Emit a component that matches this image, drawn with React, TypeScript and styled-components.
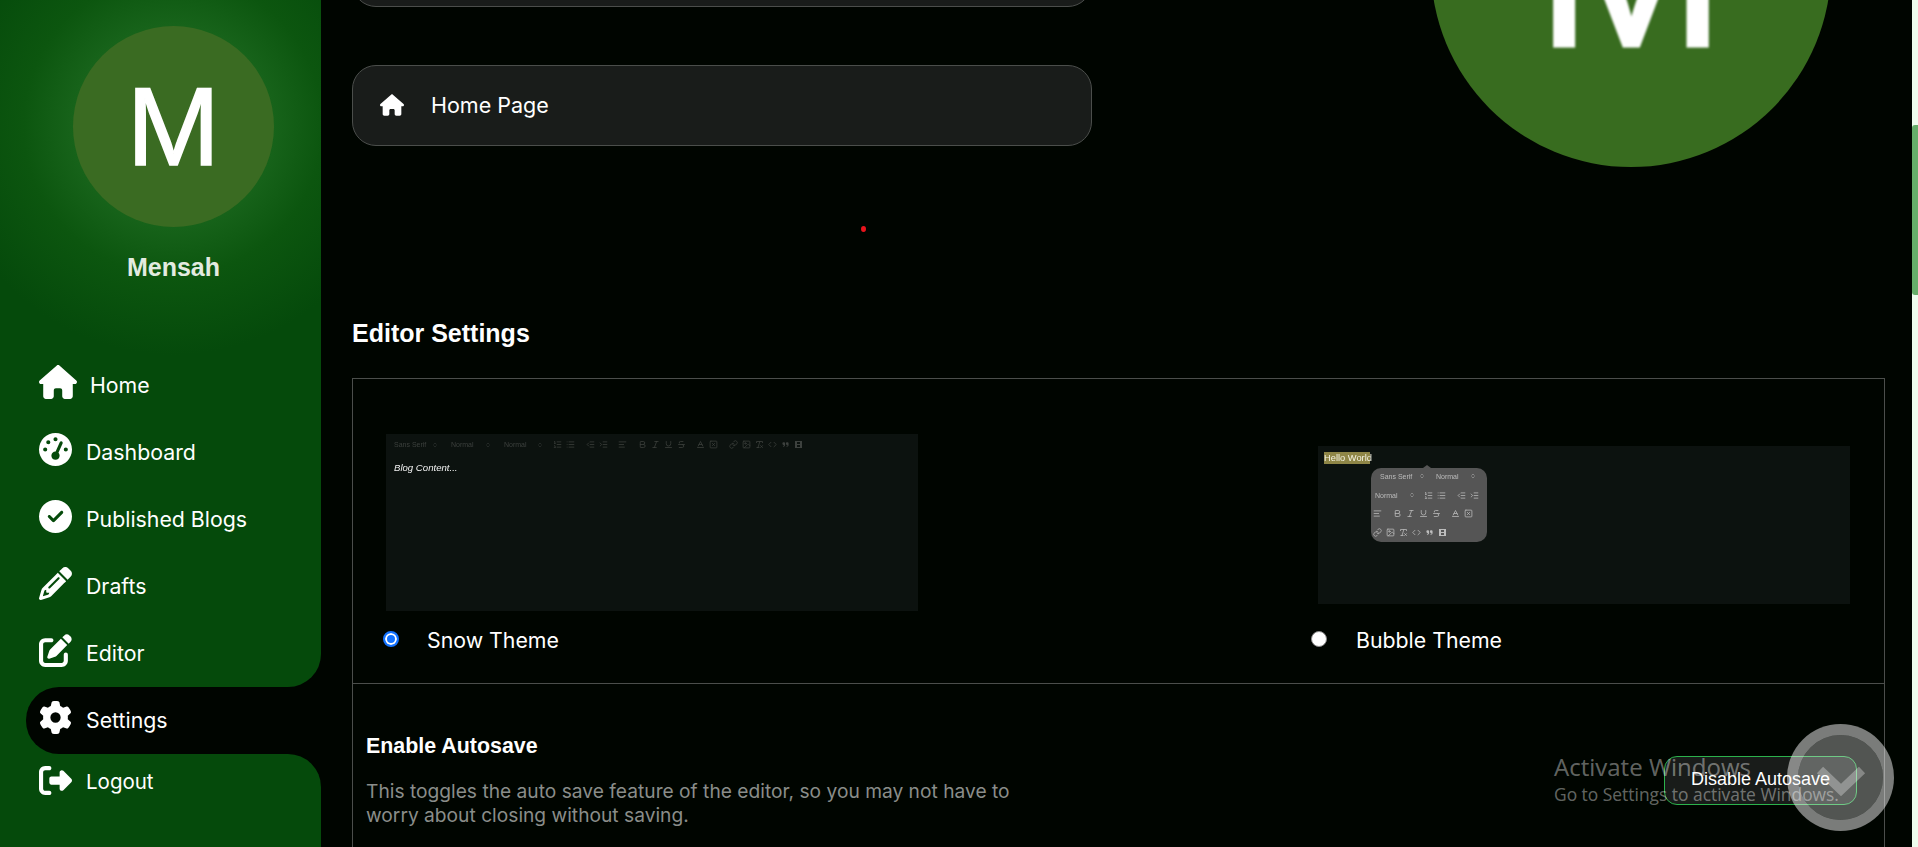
import styled, { createGlobalStyle } from 'styled-components';
import type { ReactNode } from 'react';
import {
  FaHouse,
  FaGaugeHigh,
  FaCircleCheck,
  FaPencil,
  FaPenToSquare,
  FaGear,
  FaRightFromBracket,
  FaQuoteRight,
} from 'react-icons/fa6';
import {
  AlignLeft,
  Baseline,
  Bold,
  ChevronsUpDown,
  Code,
  Image,
  Indent,
  Italic,
  Link,
  List,
  ListOrdered,
  Outdent,
  RemoveFormatting,
  SquareX,
  Strikethrough,
  Underline,
} from 'lucide-react';

const GlobalStyle = createGlobalStyle`
  html, body {
    margin: 0;
    padding: 0;
    height: 100%;
    overflow: hidden;
    background: #000500;
    font-family: Inter, "Liberation Sans", sans-serif;
  }
  * { box-sizing: border-box; }
`;

const Page = styled.div`
  position: relative;
  display: flex;
  width: 1918px;
  height: 847px;
  overflow: hidden;
  background: #000500;
  color: #fff;
`;

/* sidebar */

const Sidebar = styled.aside`
  flex: 0 0 321px;
  display: flex;
  flex-direction: column;
  height: 847px;
  background: linear-gradient(to right, #054a0b 0 70px, #000500 70px);
`;

const SidebarTop = styled.div`
  height: 687px;
  padding-top: 26px;
  border-bottom-right-radius: 33px;
  background: radial-gradient(circle at 173px 125px, #1e6a1c 0, #17631a 100px, #0c560f 150px, #054a0b 230px);
  display: flex;
  flex-direction: column;
`;

const SidebarBottom = styled.div`
  flex: 1;
  padding-top: 10px;
  border-top-right-radius: 33px;
  background: #054a0b;
`;

const Profile = styled.div`
  display: flex;
  flex-direction: column;
  align-items: center;
  padding-left: 26px;
`;

const Avatar = styled.div`
  width: 201px;
  height: 201px;
  border-radius: 50%;
  background: #3a6b22;
  display: flex;
  align-items: center;
  justify-content: center;
`;

const AvatarLetter = styled.span<{ $size: number; $blur: number; $stroke: number }>`
  font-family: "Liberation Sans", sans-serif;
  font-size: ${({ $size }) => $size}px;
  line-height: 1;
  color: #fff;
  -webkit-text-stroke: ${({ $stroke }) => $stroke}px #fff;
  filter: blur(${({ $blur }) => $blur}px);
`;

const UserName = styled.div`
  margin-top: 26px;
  font-family: "Liberation Sans", sans-serif;
  font-size: 25px;
  font-weight: 700;
  line-height: 28px;
  color: #e3ebe0;
`;

const NavList = styled.nav`
  margin-top: 85px;
  display: flex;
  flex-direction: column;
  gap: 34px;
`;

const NavRow = styled.a`
  display: flex;
  align-items: flex-start;
  gap: 14px;
  height: 33px;
  padding-left: 39px;
  color: #fff;
  font-size: 21.3px;
  line-height: 26px;
`;

const ActiveRow = styled(NavRow)`
  height: 67px;
  margin-left: 26px;
  padding: 14px 0 0 13px;
  border-radius: 33px 0 0 33px;
  background: #000500;
`;

const NavLabel = styled.span`
  padding-top: 6px;
`;

const LogoutLabel = styled.span`
  padding-top: 5px;
  font-size: 20.5px;
`;

const WideHouse = styled(FaHouse)`
  margin: -3px -1px 0 0;
`;

/* main column */

const Main = styled.main`
  flex: 1;
  min-width: 0;
  height: 847px;
  overflow: hidden;
  padding: 0 27px 0 31px;
`;

const TopRow = styled.div`
  display: flex;
  align-items: flex-start;
  margin-top: -233px;
  height: 400px;
`;

const LinkColumn = styled.div`
  flex: 0 0 740px;
  padding-top: 159px;
  display: flex;
  flex-direction: column;
  gap: 58px;
`;

const LinkCard = styled.div`
  display: flex;
  align-items: center;
  gap: 27px;
  height: 81px;
  padding: 0 0 2px 27px;
  background: #191c1a;
  border: 1px solid #4b4e4b;
  border-radius: 24px;
  font-size: 21.5px;
  color: #fff;
`;

const BigAvatar = styled.div`
  flex: 0 0 400px;
  height: 400px;
  margin-left: 339px;
  border-radius: 50%;
  background: #386c1f;
  display: flex;
  align-items: center;
  justify-content: center;
`;

const SectionTitle = styled.h2`
  margin: 152px 0 31px;
  font-family: "Liberation Sans", sans-serif;
  font-size: 25px;
  line-height: 28px;
  font-weight: 700;
  color: #fff;
`;

const SettingsBox = styled.section`
  border: 1px solid #4b4e4b;
  border-bottom: 0;
  height: 600px;
`;

const ThemeRow = styled.div`
  display: flex;
  gap: 400px;
  padding: 55px 0 32px 33px;
  border-bottom: 1px solid #4b4e4b;
`;

const ThemeOption = styled.div`
  flex: 0 0 532px;
`;

const Preview = styled.div<{ $top: number; $height: number; $bottom: number }>`
  position: relative;
  margin-top: ${({ $top }) => $top}px;
  margin-bottom: ${({ $bottom }) => $bottom}px;
  height: ${({ $height }) => $height}px;
  background: #0c120f;
  font-family: "Liberation Sans", sans-serif;
  filter: blur(0.35px);
`;

const SnowBar = styled.div`
  display: flex;
  align-items: center;
  height: 21px;
  padding-left: 8px;
  color: #3d413e;
`;

const BarGroup = styled.div`
  display: flex;
  align-items: center;
  margin-right: 6.5px;
`;

const Picker = styled.span<{ $width: number; $arrow: number }>`
  flex: 0 0 auto;
  display: flex;
  align-items: center;
  justify-content: space-between;
  width: ${({ $width }) => $width}px;
  padding-right: ${({ $arrow }) => $arrow}px;
  font-size: 7px;
  white-space: nowrap;
`;

const BarIcon = styled.span`
  flex: 0 0 13px;
  display: flex;
  justify-content: center;
`;

const BlogText = styled.div`
  padding: 7px 0 0 8px;
  font-size: 9.6px;
  line-height: 12px;
  font-style: italic;
  color: #f2f2f2;
`;

const HelloText = styled.span`
  position: absolute;
  left: 6px;
  top: 6px;
  width: 46px;
  height: 12px;
  background: #8f8647;
  color: #f4f2e2;
  font-size: 9.3px;
  line-height: 12px;
  white-space: nowrap;
`;

const Bubble = styled.div`
  position: absolute;
  left: 53px;
  top: 22px;
  width: 116px;
  height: 74px;
  border-radius: 10px;
  background: #555;
  color: #bdbdbd;
  &::before {
    content: '';
    position: absolute;
    left: 52px;
    top: -3px;
    border-left: 4px solid transparent;
    border-right: 4px solid transparent;
    border-bottom: 3px solid #555;
  }
`;

const BubbleRow = styled.div<{ $pad: number }>`
  display: flex;
  align-items: center;
  height: 18.7px;
  padding-left: ${({ $pad }) => $pad}px;
  &:first-of-type {
    margin-top: -1px;
  }
`;

const RadioRow = styled.label`
  display: flex;
  align-items: center;
  height: 22px;
`;

const RadioDot = styled.input.attrs({ type: 'radio' })<{ $inset: number }>`
  appearance: none;
  flex: 0 0 16px;
  width: 16px;
  height: 16px;
  margin: 0 0 2px ${({ $inset }) => $inset}px;
  border-radius: 50%;
  background: #fff;
  border: 1px solid #8a8a8a;
  &:checked {
    border: 2px solid #1473ff;
    background: #1473ff;
    box-shadow: inset 0 0 0 2px #fff;
  }
`;

const RadioText = styled.span<{ $gap: number }>`
  margin-left: ${({ $gap }) => $gap}px;
  font-size: 21.3px;
  color: #fff;
`;

const AutosaveRow = styled.div`
  display: flex;
  align-items: center;
  justify-content: space-between;
  padding: 50px 27px 0 13px;
`;

const AutosaveTitle = styled.div`
  font-family: "Liberation Sans", sans-serif;
  font-size: 21.4px;
  line-height: 24px;
  font-weight: 700;
  color: #fff;
`;

const AutosaveNote = styled.p`
  margin: 21px 0 0;
  width: 665px;
  font-size: 19.2px;
  line-height: 24px;
  color: #8a8d8a;
`;

const AutosaveButton = styled.button`
  width: 193px;
  height: 49px;
  padding: 0 0 2px;
  border: 1px solid #2cb24c;
  border-radius: 13px;
  background: #191c1a;
  color: #fff;
  font-family: "Liberation Sans", sans-serif;
  font-size: 18px;
`;

/* page scrollbar and things lying over the page */

const ScrollTrack = styled.div`
  flex: 0 0 6px;
  height: 847px;
  padding-top: 125px;
  background: #eefdee;
`;

const ScrollThumb = styled.div`
  height: 170px;
  border-radius: 3px 0 0 3px;
  background: #66ae6a;
`;

const RedDot = styled.span`
  position: absolute;
  left: 861px;
  top: 226px;
  width: 5px;
  height: 6px;
  border-radius: 50%;
  background: #e8141c;
`;

const ActivateNotice = styled.div`
  position: absolute;
  left: 1554px;
  top: 752px;
  font-family: "Open Sans", sans-serif;
  color: rgba(255, 255, 255, 0.4);
  pointer-events: none;
`;

const ActivateTitle = styled.div`
  font-size: 24px;
  line-height: 30px;
`;

const ActivateHint = styled.div`
  font-size: 17.4px;
  line-height: 24px;
`;

const CheckBadge = styled.div`
  position: absolute;
  left: 1787px;
  top: 724px;
  width: 107px;
  height: 107px;
  border-radius: 50%;
  border: 11px solid rgba(255, 255, 255, 0.48);
  background: rgba(255, 255, 255, 0.32);
  background-clip: padding-box;
  display: flex;
  align-items: center;
  justify-content: center;
  pointer-events: none;
`;

const CheckMark = styled.svg`
  margin-top: 6px;
`;

// quill's video button is a solid block with two windows cut out
const VideoGlyph = () => (
  <svg width="9" height="9" viewBox="0 0 18 18">
    <path
      fill="currentColor"
      fillRule="evenodd"
      d="M2 2h14v14H2zM6 4v4h6V4zM6 10v4h6v-4z"
    />
  </svg>
);

const snowGroups: ReactNode[][] = [
  [<ListOrdered key="ol" size={9} />, <List key="ul" size={9} />],
  [<Outdent key="out" size={9} />, <Indent key="in" size={9} />],
  [<AlignLeft key="al" size={9} />],
  [<Bold key="b" size={9} />, <Italic key="i" size={9} />, <Underline key="u" size={9} />, <Strikethrough key="s" size={9} />],
  [<Baseline key="a" size={9} />, <SquareX key="h" size={9} />],
  [
    <Link key="l" size={9} />,
    <Image key="p" size={9} />,
    <RemoveFormatting key="r" size={9} />,
    <Code key="c" size={9} />,
    <FaQuoteRight key="q" size={7} />,
    <VideoGlyph key="v" />,
  ],
];

const PickerLabel = ({ width, arrow, children }: { width: number; arrow: number; children: ReactNode }) => (
  <Picker $width={width} $arrow={arrow}>
    {children}
    <ChevronsUpDown size={6} />
  </Picker>
);

const IconRun = ({ icons }: { icons: ReactNode[] }) => (
  <>
    {icons.map((icon, i) => (
      <BarIcon key={i}>{icon}</BarIcon>
    ))}
  </>
);

const navItems = [
  { label: 'Home', icon: <WideHouse size={38} /> },
  { label: 'Dashboard', icon: <FaGaugeHigh size={33} /> },
  { label: 'Published Blogs', icon: <FaCircleCheck size={33} /> },
  { label: 'Drafts', icon: <FaPencil size={33} /> },
  { label: 'Editor', icon: <FaPenToSquare size={33} /> },
];

export default function App() {
  return (
    <Page>
      <GlobalStyle />
      <Sidebar>
        <SidebarTop>
          <Profile>
            <Avatar>
              <AvatarLetter $size={112} $blur={0.5} $stroke={1.5}>M</AvatarLetter>
            </Avatar>
            <UserName>Mensah</UserName>
          </Profile>
          <NavList>
            {navItems.map((item) => (
              <NavRow key={item.label}>
                {item.icon}
                <NavLabel>{item.label}</NavLabel>
              </NavRow>
            ))}
          </NavList>
        </SidebarTop>
        <ActiveRow>
          <FaGear size={33} />
          <NavLabel>Settings</NavLabel>
        </ActiveRow>
        <SidebarBottom>
          <NavRow>
            <FaRightFromBracket size={33} />
            <LogoutLabel>Logout</LogoutLabel>
          </NavRow>
        </SidebarBottom>
      </Sidebar>

      <Main>
        <TopRow>
          <LinkColumn>
            <LinkCard />
            <LinkCard>
              <FaHouse size={24} />
              <span>Home Page</span>
            </LinkCard>
          </LinkColumn>
          <BigAvatar>
            <AvatarLetter $size={228} $blur={1} $stroke={3}>M</AvatarLetter>
          </BigAvatar>
        </TopRow>

        <SectionTitle>Editor Settings</SectionTitle>

        <SettingsBox>
          <ThemeRow>
            <ThemeOption>
              <Preview $top={0} $height={177} $bottom={18}>
                <SnowBar>
                  <PickerLabel width={57} arrow={13}>Sans Serif</PickerLabel>
                  <PickerLabel width={53} arrow={13}>Normal</PickerLabel>
                  <PickerLabel width={47} arrow={8}>Normal</PickerLabel>
                  {snowGroups.map((group, i) => (
                    <BarGroup key={i}>
                      <IconRun icons={group} />
                    </BarGroup>
                  ))}
                </SnowBar>
                <BlogText>Blog Content...</BlogText>
              </Preview>
              <RadioRow>
                <RadioDot name="theme" $inset={-3} defaultChecked />
                <RadioText $gap={28}>Snow Theme</RadioText>
              </RadioRow>
            </ThemeOption>

            <ThemeOption>
              <Preview $top={12} $height={158} $bottom={25}>
                <HelloText>Hello World</HelloText>
                <Bubble>
                  <BubbleRow $pad={9}>
                    <PickerLabel width={56} arrow={11}>Sans Serif</PickerLabel>
                    <PickerLabel width={41} arrow={1}>Normal</PickerLabel>
                  </BubbleRow>
                  <BubbleRow $pad={4}>
                    <PickerLabel width={47} arrow={7}>Normal</PickerLabel>
                    <BarGroup>
                      <IconRun icons={snowGroups[0]} />
                    </BarGroup>
                    <BarGroup>
                      <IconRun icons={snowGroups[1]} />
                    </BarGroup>
                  </BubbleRow>
                  <BubbleRow $pad={0}>
                    <BarGroup>
                      <IconRun icons={snowGroups[2]} />
                    </BarGroup>
                    <BarGroup>
                      <IconRun icons={snowGroups[3]} />
                    </BarGroup>
                    <BarGroup>
                      <IconRun icons={snowGroups[4]} />
                    </BarGroup>
                  </BubbleRow>
                  <BubbleRow $pad={0}>
                    <IconRun icons={snowGroups[5]} />
                  </BubbleRow>
                </Bubble>
              </Preview>
              <RadioRow>
                <RadioDot name="theme" $inset={-7} />
                <RadioText $gap={29}>Bubble Theme</RadioText>
              </RadioRow>
            </ThemeOption>
          </ThemeRow>

          <AutosaveRow>
            <div>
              <AutosaveTitle>Enable Autosave</AutosaveTitle>
              <AutosaveNote>
                This toggles the auto save feature of the editor, so you may not have to worry about closing without
                saving.
              </AutosaveNote>
            </div>
            <AutosaveButton>Disable Autosave</AutosaveButton>
          </AutosaveRow>
        </SettingsBox>
      </Main>

      <ScrollTrack>
        <ScrollThumb />
      </ScrollTrack>

      <RedDot />
      <ActivateNotice>
        <ActivateTitle>Activate Windows</ActivateTitle>
        <ActivateHint>Go to Settings to activate Windows.</ActivateHint>
      </ActivateNotice>
      <CheckBadge>
        <CheckMark width="50" height="30" viewBox="0 0 50 30">
          <polyline points="4,4 25,24 46,4" fill="none" stroke="rgba(255,255,255,0.3)" strokeWidth="9" />
        </CheckMark>
      </CheckBadge>
    </Page>
  );
}
